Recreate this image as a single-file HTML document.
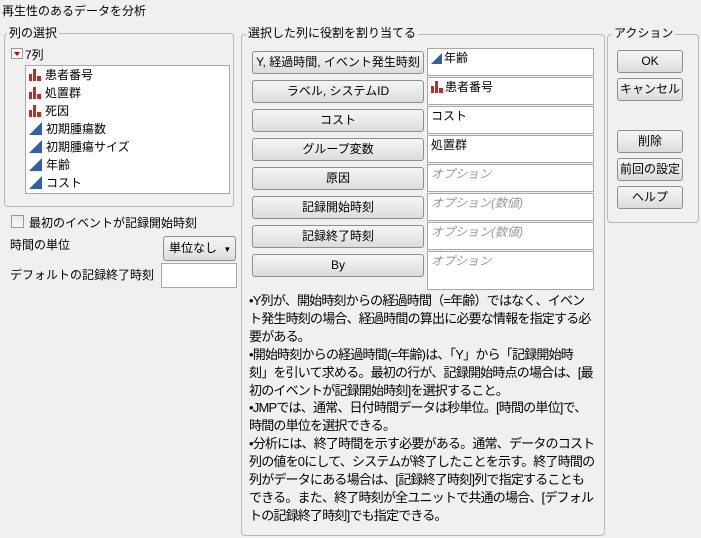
<!DOCTYPE html>
<html><head><meta charset="utf-8"><style>
*{box-sizing:border-box;margin:0;padding:0}
body{width:701px;height:538px;background:#f0f0f0;font-family:"Liberation Sans","Noto Sans CJK JP",sans-serif;font-size:12px;color:#000;position:relative;overflow:hidden}
.a{position:absolute;white-space:nowrap}
.grp{position:absolute;border:1px solid #b8b8b8;border-radius:4px}
.lg{position:absolute;background:#f0f0f0;padding:0 2px;font-size:12px;line-height:14px}
.btn{position:absolute;border:1px solid #8e8e8e;border-radius:3px;background:linear-gradient(#f6f6f6,#dcdcdc);text-align:center;font-size:12px;line-height:21px}
.fld{position:absolute;background:#fff;border:1px solid #a8a8a8;padding:2px 3px;font-size:12px;line-height:14px}
.opt{color:#9a9a9a;font-style:italic}
.item{position:absolute;left:3px;height:18px;line-height:18px;font-size:12px}
.bar{display:inline-block;width:12px;height:12px;vertical-align:-2px;margin-right:4px}
.tri{display:inline-block;width:0;height:0;border-left:13px solid transparent;border-bottom:13px solid #2f5fb0;vertical-align:-2px;margin-right:4px}
.txt{position:absolute;left:249px;top:292px;font-size:13px;letter-spacing:-0.8px;line-height:17.9px;white-space:nowrap}
</style></head><body>
<div class="a" style="left:2px;top:2px;font-size:12px">再生性のあるデータを分析</div>

<div class="grp" style="left:4px;top:33px;width:230px;height:174px"></div>
<div class="lg" style="left:7px;top:26px">列の選択</div>
<div class="a" style="left:11px;top:48px;width:12px;height:11px;border:1px solid #999;background:#fff"><div style="position:absolute;left:2px;top:3px;border-left:3px solid transparent;border-right:3px solid transparent;border-top:4px solid #c00"></div></div>
<div class="a" style="left:25px;top:46px">7列</div>
<div class="a" style="left:25px;top:65px;width:205px;height:129px;background:#fff;border:1px solid #a8a8a8">
<div class="item" style="top:0"><svg class="bar" viewBox="0 0 12 12"><rect x="0" y="5" width="3" height="7" fill="#c8291c"/><rect x="4" y="0" width="3" height="12" fill="#c8291c"/><rect x="8" y="7" width="4" height="5" fill="#c8291c"/></svg>患者番号</div>
<div class="item" style="top:18px"><svg class="bar" viewBox="0 0 12 12"><rect x="0" y="5" width="3" height="7" fill="#c8291c"/><rect x="4" y="0" width="3" height="12" fill="#c8291c"/><rect x="8" y="7" width="4" height="5" fill="#c8291c"/></svg>処置群</div>
<div class="item" style="top:36px"><svg class="bar" viewBox="0 0 12 12"><rect x="0" y="5" width="3" height="7" fill="#c8291c"/><rect x="4" y="0" width="3" height="12" fill="#c8291c"/><rect x="8" y="7" width="4" height="5" fill="#c8291c"/></svg>死因</div>
<div class="item" style="top:54px"><span class="tri"></span>初期腫瘍数</div>
<div class="item" style="top:72px"><span class="tri"></span>初期腫瘍サイズ</div>
<div class="item" style="top:90px"><span class="tri"></span>年齢</div>
<div class="item" style="top:108px"><span class="tri"></span>コスト</div>
</div>

<div class="a" style="left:11px;top:215px;width:13px;height:13px;border:1px solid #999;background:linear-gradient(#e8e8e8,#fafafa)"></div>
<div class="a" style="left:29px;top:214px">最初のイベントが記録開始時刻</div>
<div class="a" style="left:10px;top:236px">時間の単位</div>
<div class="btn" style="left:163px;top:236px;width:73px;height:25px;line-height:23px;text-align:left;padding-left:5px">単位なし <span style="font-size:8px;margin-left:3px">▼</span></div>
<div class="a" style="left:10px;top:266px">デフォルトの記録終了時刻</div>
<div class="a" style="left:161px;top:263px;width:76px;height:25px;background:#fff;border:1px solid #a8a8a8"></div>

<div class="grp" style="left:241px;top:34px;width:364px;height:502px"></div>
<div class="lg" style="left:246px;top:26px">選択した列に役割を割り当てる</div>
<div class="btn" style="left:252px;top:51px;width:172px;height:23px">Y, 経過時間, イベント発生時刻</div>
<div class="btn" style="left:252px;top:80px;width:172px;height:23px">ラベル, システムID</div>
<div class="btn" style="left:252px;top:109px;width:172px;height:23px">コスト</div>
<div class="btn" style="left:252px;top:138px;width:172px;height:23px">グループ変数</div>
<div class="btn" style="left:252px;top:167px;width:172px;height:23px">原因</div>
<div class="btn" style="left:252px;top:196px;width:172px;height:23px">記録開始時刻</div>
<div class="btn" style="left:252px;top:225px;width:172px;height:23px">記録終了時刻</div>
<div class="btn" style="left:252px;top:254px;width:172px;height:23px">By</div>
<div class="fld" style="left:427px;top:48px;width:167px;height:28px"><span class="tri" style="border-left-width:11px;border-bottom-width:11px;margin-right:2px"></span>年齢</div>
<div class="fld" style="left:427px;top:77px;width:167px;height:28px"><svg class="bar" style="margin-right:2px" viewBox="0 0 12 12"><rect x="0" y="5" width="3" height="7" fill="#c8291c"/><rect x="4" y="0" width="3" height="12" fill="#c8291c"/><rect x="8" y="7" width="4" height="5" fill="#c8291c"/></svg>患者番号</div>
<div class="fld" style="left:427px;top:106px;width:167px;height:28px">コスト</div>
<div class="fld" style="left:427px;top:135px;width:167px;height:28px">処置群</div>
<div class="fld opt" style="left:427px;top:164px;width:167px;height:28px">オプション</div>
<div class="fld opt" style="left:427px;top:193px;width:167px;height:28px">オプション(数値)</div>
<div class="fld opt" style="left:427px;top:222px;width:167px;height:28px">オプション(数値)</div>
<div class="fld opt" style="left:427px;top:251px;width:167px;height:39px">オプション</div>
<div class="txt">•Y列が、開始時刻からの経過時間（=年齢）ではなく、イベン<br>ト発生時刻の場合、経過時間の算出に必要な情報を指定する必<br>要がある。<br>•開始時刻からの経過時間(=年齢)は、「Y」から「記録開始時<br>刻」を引いて求める。最初の行が、記録開始時点の場合は、[最<br>初のイベントが記録開始時刻]を選択すること。<br>•JMPでは、通常、日付時間データは秒単位。[時間の単位]で、<br>時間の単位を選択できる。<br>•分析には、終了時間を示す必要がある。通常、データのコスト<br>列の値を0にして、システムが終了したことを示す。終了時間の<br>列がデータにある場合は、[記録終了時刻]列で指定することも<br>できる。また、終了時刻が全ユニットで共通の場合、[デフォル<br>トの記録終了時刻]でも指定できる。</div>

<div class="grp" style="left:607px;top:34px;width:92px;height:189px"></div>
<div class="lg" style="left:612px;top:26px">アクション</div>
<div class="btn" style="left:617px;top:50px;width:66px;height:23px">OK</div>
<div class="btn" style="left:617px;top:78px;width:66px;height:23px">キャンセル</div>
<div class="btn" style="left:617px;top:130px;width:66px;height:23px">削除</div>
<div class="btn" style="left:617px;top:158px;width:66px;height:23px">前回の設定</div>
<div class="btn" style="left:617px;top:186px;width:66px;height:23px">ヘルプ</div>
</body></html>
